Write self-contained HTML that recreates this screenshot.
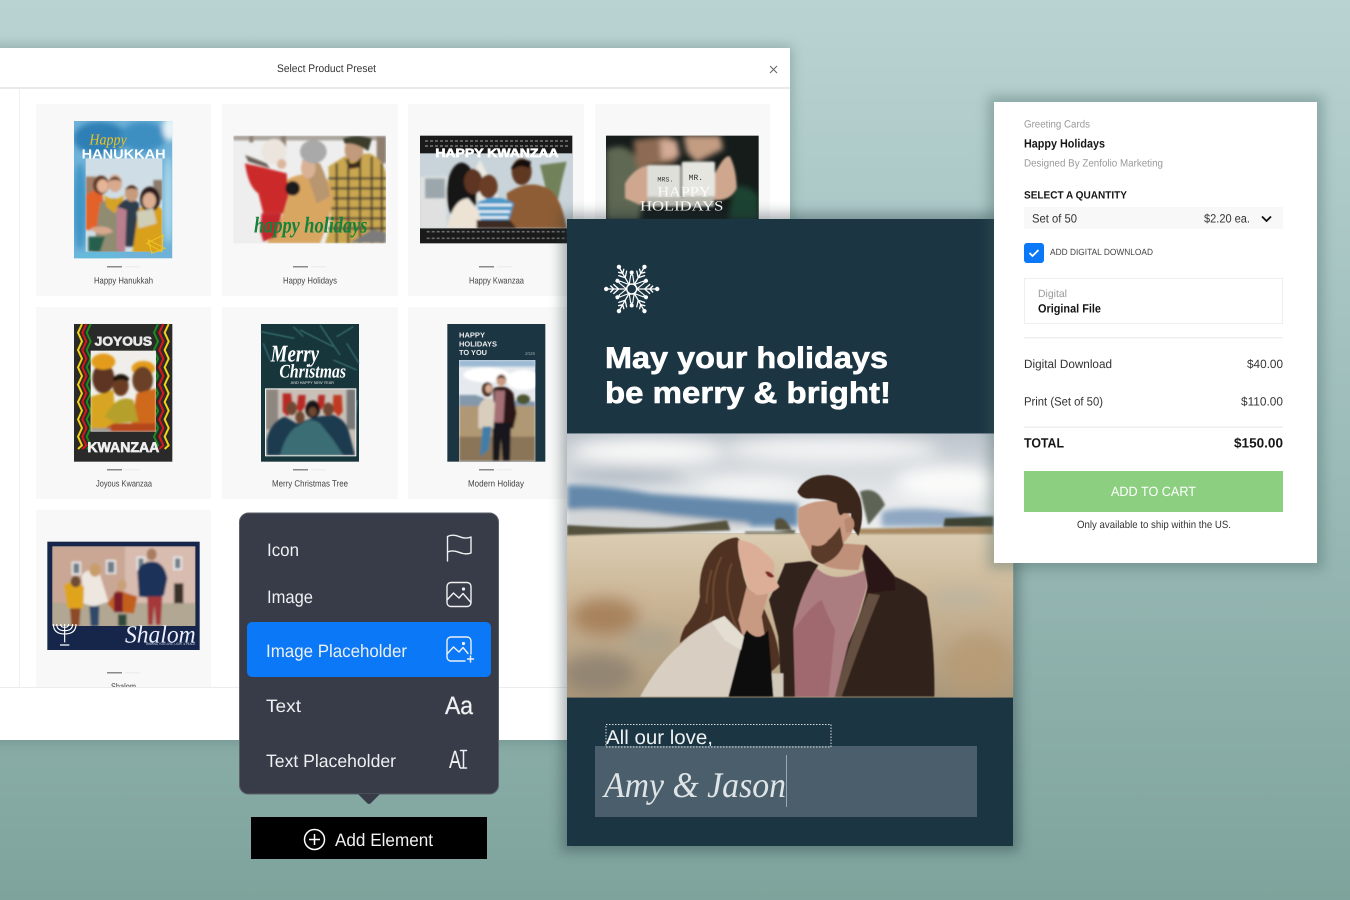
<!DOCTYPE html>
<html lang="en">
<head>
<meta charset="utf-8">
<title>Greeting Cards</title>
<style>
html,body{margin:0;padding:0;width:1350px;height:900px;overflow:hidden;background:#9dbcb9}
svg{display:block;font-family:"Liberation Sans",sans-serif}
text{text-rendering:geometricPrecision}
.lb{font-size:9px;fill:#444}
.m{font-size:18px;fill:#eef0f2}
.g{font-size:10.500px;fill:#9a9a9a}
.d{font-size:12px;fill:#333}
.b{font-weight:700;fill:#151515}
.tb{fill:#8a8a8a}
</style>
</head>
<body>
<svg width="1350" height="900" viewBox="0 0 1350 900" xmlns="http://www.w3.org/2000/svg">
<defs>
<linearGradient id="bg" x1="0" y1="0" x2="0" y2="1"><stop offset="0" stop-color="#b9d3d2"/><stop offset=".5" stop-color="#9cbcb9"/><stop offset="1" stop-color="#7ea39c"/></linearGradient>
<linearGradient id="sky" x1="0" y1="0" x2="0" y2="1"><stop offset="0" stop-color="#bcc4cc"/><stop offset=".6" stop-color="#e4e7e9"/><stop offset="1" stop-color="#eceeee"/></linearGradient>
<linearGradient id="field" x1="0" y1="0" x2="0" y2="1"><stop offset="0" stop-color="#dbcdb3"/><stop offset=".4" stop-color="#cbb697"/><stop offset="1" stop-color="#ab987b"/></linearGradient>
<filter id="b1" x="-20%" y="-20%" width="140%" height="140%"><feGaussianBlur stdDeviation="1.500"/></filter>
<filter id="b2" x="-20%" y="-20%" width="140%" height="140%"><feGaussianBlur stdDeviation="3"/></filter>
<filter id="b3" x="-30%" y="-30%" width="160%" height="160%"><feGaussianBlur stdDeviation="9"/></filter>
<filter id="b4" x="-50%" y="-50%" width="200%" height="200%"><feGaussianBlur stdDeviation="24"/></filter>
<filter id="sh" x="-10%" y="-10%" width="120%" height="120%"><feGaussianBlur stdDeviation="6"/></filter>
<clipPath id="cDlg"><rect x="0" y="89" width="790" height="598"/></clipPath>
<clipPath id="c1"><rect x="222" y="243" width="295" height="412"/></clipPath>
<clipPath id="c1b"><rect x="257" y="355" width="230" height="280"/></clipPath>
<clipPath id="c2"><rect x="700" y="287" width="458" height="323"/></clipPath>
<clipPath id="c3"><rect x="60" y="340" width="457" height="225"/></clipPath>
<clipPath id="c4"><rect x="618" y="287" width="458" height="253"/></clipPath>
<clipPath id="c5"><rect x="272" y="152" width="196" height="243"/></clipPath>
<clipPath id="c6"><rect x="798" y="268" width="268" height="198"/></clipPath>
<clipPath id="c7"><rect x="177" y="180" width="229" height="304"/></clipPath>
<clipPath id="c8"><rect x="67" y="124" width="429" height="239"/></clipPath>
<clipPath id="cM"><rect x="6" y="10" width="1339" height="793"/></clipPath>
<g id="arm" fill="none" stroke="#fff" stroke-width="1.300" stroke-linecap="round">
<path d="M5 0H24M13 0l5-4.500M13 0l5 4.500M18 0l3-3M18 0l3 3"/>
<circle cx="25.500" r="2.200" fill="#fff" stroke="none"/>
</g>
<g id="arm2" fill="none" stroke="#fff" stroke-width="1.100" stroke-linecap="round">
<path d="M4.500 -2.500L14 -1M4.500 2.500L14 1M14 -1V1"/>
<circle cx="16.500" r="2" fill="#fff" stroke="none"/>
</g>
</defs>

<rect width="1350" height="900" fill="url(#bg)"/>

<!-- Preset dialog -->
<rect x="-10" y="46" width="802" height="696" fill="#4a6a68" opacity=".35" filter="url(#sh)"/>
<rect x="0" y="48" width="790" height="692" fill="#fff"/>
<rect x="0" y="87" width="790" height="2" fill="#e9e9e9"/>
<rect x="19" y="89" width="1" height="598" fill="#f0f0f0"/>
<text x="277" y="72" font-size="11" fill="#333" textLength="99" lengthAdjust="spacingAndGlyphs">Select Product Preset</text>
<path d="M770 66l7 7M777 66l-7 7" stroke="#666" stroke-width="1" fill="none"/>

<g fill="#f8f8f8" clip-path="url(#cDlg)">
<rect x="36" y="104" width="175" height="192"/><rect x="222" y="104" width="176" height="192"/><rect x="408" y="104" width="176" height="192"/><rect x="595" y="104" width="175" height="192"/>
<rect x="36" y="307" width="175" height="192"/><rect x="222" y="307" width="176" height="192"/><rect x="408" y="307" width="176" height="192"/>
<rect x="36" y="510" width="175" height="192"/>
</g>

<!-- pager bars -->
<g>
<rect class="tb" x="107" y="266" width="15" height="1.500"/><rect x="125" y="266" width="15" height="1.500" fill="#eee"/>
<rect class="tb" x="293" y="266" width="15" height="1.500"/><rect x="311" y="266" width="15" height="1.500" fill="#eee"/>
<rect class="tb" x="479" y="266" width="15" height="1.500"/><rect x="497" y="266" width="15" height="1.500" fill="#eee"/>
<rect class="tb" x="107" y="469" width="15" height="1.500"/><rect x="125" y="469" width="15" height="1.500" fill="#eee"/>
<rect class="tb" x="293" y="469" width="15" height="1.500"/><rect x="311" y="469" width="15" height="1.500" fill="#eee"/>
<rect class="tb" x="479" y="469" width="15" height="1.500"/><rect x="497" y="469" width="15" height="1.500" fill="#eee"/>
<rect class="tb" x="107" y="672" width="15" height="1.500"/><rect x="125" y="672" width="15" height="1.500" fill="#eee"/>
</g>

<!-- labels -->
<text class="lb" x="94" y="283.500" textLength="59" lengthAdjust="spacingAndGlyphs">Happy Hanukkah</text>
<text class="lb" x="283" y="283.500" textLength="54" lengthAdjust="spacingAndGlyphs">Happy Holidays</text>
<text class="lb" x="469" y="283.500" textLength="55" lengthAdjust="spacingAndGlyphs">Happy Kwanzaa</text>
<text class="lb" x="96" y="486.500" textLength="56" lengthAdjust="spacingAndGlyphs">Joyous Kwanzaa</text>
<text class="lb" x="272" y="486.500" textLength="76" lengthAdjust="spacingAndGlyphs">Merry Christmas Tree</text>
<text class="lb" x="468" y="486.500" textLength="56" lengthAdjust="spacingAndGlyphs">Modern Holiday</text>
<g clip-path="url(#cDlg)"><text class="lb" x="111" y="689.500" textLength="25" lengthAdjust="spacingAndGlyphs">Shalom</text></g>

<!-- Hanukkah -->
<g transform="translate(0,40) scale(.33333)">
<g clip-path="url(#c1)">
<rect x="222" y="243" width="295" height="412" fill="#6fb2d8"/>
<g filter="url(#b3)">
<ellipse cx="300" cy="295" rx="80" ry="50" fill="#2f7fb5"/>
<ellipse cx="430" cy="290" rx="70" ry="45" fill="#3d8fc2"/>
<ellipse cx="240" cy="500" rx="20" ry="130" fill="#3f95c6"/>
<ellipse cx="505" cy="480" rx="14" ry="130" fill="#a8d6ea"/>
<ellipse cx="510" cy="265" rx="22" ry="36" fill="#e6f3f8"/>
<ellipse cx="290" cy="648" rx="80" ry="14" fill="#64bbdc"/>
</g>
</g>
<rect x="257" y="355" width="230" height="280" fill="#cfdde6"/>
<g clip-path="url(#c1b)"><g filter="url(#b2)">
<rect x="257" y="410" width="30" height="60" fill="#a07d66"/>
<rect x="460" y="420" width="27" height="60" fill="#8c7a6a"/>
<path d="M257 470q20-30 50-10l15 110-65 0z" fill="#e2622b"/>
<ellipse cx="303" cy="435" rx="24" ry="28" fill="#5f3a27"/><ellipse cx="308" cy="438" rx="17" ry="20" fill="#e6b497"/>
<path d="M300 490q40-30 80 0l-10 150h-90z" fill="#8f8c72"/>
<path d="M312 465q30 25 60 0l-8 35-20 20-25-20z" fill="#d7a324"/>
<ellipse cx="345" cy="430" rx="21" ry="26" fill="#d8a98d"/><path d="M325 425q20-30 40 0q-20-12-40 0z" fill="#3b2a20"/>
<path d="M352 500q30-40 65-10l5 130h-45z" fill="#2f3c4c"/><path d="M350 500l30 10-5 130-25-10z" fill="#b97f8e"/>
<ellipse cx="395" cy="460" rx="20" ry="25" fill="#c79a7b"/><path d="M375 450q20-28 40 0q-20-10-40 0z" fill="#2c211b"/>
<path d="M415 510q40-35 72 0v130h-90z" fill="#d9a01f"/>
<ellipse cx="450" cy="478" rx="30" ry="38" fill="#2a1f1b"/><ellipse cx="448" cy="482" rx="20" ry="24" fill="#dcae92"/>
<path d="M410 515l50-10 10 45-55 15z" fill="#cfcfb8"/>
<path d="M265 590h50l-15 45h-35z" fill="#27614e"/>
<path d="M270 565q50-15 70 10-40 20-70-10z" fill="#d7a88d"/>
</g></g>
<text x="268" y="314" font-family="Liberation Serif" font-style="italic" font-size="46" fill="#efc21f" textLength="112" lengthAdjust="spacingAndGlyphs">Happy</text>
<text x="245" y="355" font-size="40" font-weight="700" fill="#fff" textLength="252" lengthAdjust="spacingAndGlyphs">HANUKKAH</text>
<path d="M440 610l50-25-5 50zM495 625l-50-25 10 40z" fill="none" stroke="#eec51f" stroke-width="3"/>
</g>

<!-- Happy Holidays -->
<g transform="translate(0,40) scale(.33333)">
<rect x="700" y="287" width="458" height="323" fill="#eeeeee"/>
<g clip-path="url(#c2)"><g filter="url(#b2)">
<path d="M700 287h458v14H700z" fill="#a8a29a"/>
<path d="M1130 290h28v80h-28zM842 287h16v34h-16zM748 287h12v20h-12z" fill="#8f7e6e"/>
<path d="M985 380q45-30 60-35l65-5q40 20 48 60v210H975q25-70 15-130z" fill="#c9a64f"/>
<g stroke="#2b2b2b" stroke-width="6" opacity=".85"><path d="M985 415h175M985 445h175M985 475h175M985 505h175M985 535h175M985 565h175M1010 370v240M1045 355v255M1080 350v260M1115 350v260M1145 370v240"/></g>
<path d="M1050 608h108v-30l-40-10z" fill="#7b7b7b"/>
<ellipse cx="1062" cy="330" rx="28" ry="33" fill="#c29a7c"/>
<path d="M1030 350q25 40 55 0l-5 32-30 5z" fill="#3d2b1f"/>
<path d="M1028 295q42-15 88 0l-11 38q-45-28-70-21z" fill="#3a3d2a"/>
<path d="M860 420q60-35 125 0l15 50q-10 70-40 140H800q50-70 65-140z" fill="#d9a662"/>
<path d="M905 360l55 10q25 50 30 100l-40 20-20-60z" fill="#b89670"/>
<ellipse cx="925" cy="385" rx="22" ry="30" fill="#d9b195"/>
<ellipse cx="940" cy="335" rx="40" ry="35" fill="#a9a9a9"/>
<path d="M735 370q45 10 65 15l60 15 5 70-15 50h-60l-15-60q-30-20-40-90z" fill="#cc2c2b"/>
<path d="M785 520h60l-15 70-40 15-10-35z" fill="#c5272e"/>
<ellipse cx="822" cy="335" rx="38" ry="38" fill="#ebe5de"/>
<ellipse cx="845" cy="372" rx="14" ry="15" fill="#dcb69c"/>
<path d="M735 345l65 25 10 15-65-20z" fill="#6b6058"/>
<ellipse cx="878" cy="445" rx="22" ry="22" fill="#1c1c1e"/>
</g></g>
<text x="762" y="578" font-family="Liberation Serif" font-style="italic" font-weight="700" font-size="68" fill="#16813a" textLength="340" lengthAdjust="spacingAndGlyphs">happy holidays</text>
</g>

<!-- Kwanzaa -->
<g transform="translate(400,40) scale(.33333)">
<rect x="60" y="287" width="457" height="323" fill="#1a1a1a"/>
<path d="M75 303h430M75 318h430M80 575h430M80 595h430" stroke="#6a6a6a" stroke-width="5" stroke-dasharray="9 6"/>
<rect x="60" y="340" width="457" height="225" fill="#c9d4da"/>
<g clip-path="url(#c3)"><g filter="url(#b2)">
<path d="M60 410h80v155H60z" fill="#dfe0df"/><path d="M75 415h60v60H75z" fill="#9ba7ad"/>
<path d="M240 360l60 120h-120z" fill="#eceae2"/>
<path d="M420 375l80-10-15 60-10 50h-30z" fill="#71825a"/>
<ellipse cx="185" cy="460" rx="45" ry="92" fill="#131318"/>
<ellipse cx="220" cy="425" rx="28" ry="38" fill="#5d3522"/>
<path d="M140 565q20-90 65-90l25 30 20 60z" fill="#ece3d5"/>
<path d="M320 460q60-40 110-20 50 10 70 125H330z" fill="#8e5d36"/>
<ellipse cx="365" cy="395" rx="30" ry="40" fill="#5e3823"/>
<path d="M333 385q20-40 60-20l-5 20q-30-15-50 5z" fill="#14100e"/>
<ellipse cx="265" cy="440" rx="28" ry="36" fill="#6a3e28"/>
<path d="M232 490q50-35 110 0l-15 50h-85z" fill="#4c9ac9"/>
<g stroke="#fff" stroke-width="6"><path d="M235 495l100 0M235 515l95 0M240 532l85 0"/></g>
<path d="M230 540l100 0 20 25h-120z" fill="#3c2a24"/>
</g></g>
<text x="106" y="351" font-size="36" font-weight="700" fill="#fff" stroke="#fff" stroke-width="2" textLength="370" lengthAdjust="spacingAndGlyphs">HAPPY KWANZAA</text>
</g>

<!-- Mugs -->
<g transform="translate(400,40) scale(.33333)">
<rect x="618" y="287" width="458" height="253" fill="#161c1a"/>
<g clip-path="url(#c4)"><g filter="url(#b3)">
<path d="M618 330q40-20 70 0l60 60-30 150H618z" fill="#5f6752"/>
<path d="M700 300l110-13 20 80-120 20z" fill="#8c6b52"/>
<path d="M780 300h50l10 50-55 10z" fill="#d4ab95"/>
<path d="M850 287h110l10 40-80 40-30-30z" fill="#c39c82"/>
<path d="M1000 440q50-10 76 30v70h-90z" fill="#1d4231"/>
</g>
<g filter="url(#b2)">
<path d="M675 430q30-50 75-55l10 100-40 20-45-20z" fill="#cfa78f"/>
<path d="M945 400q30-60 45-50 20 40 20 95-20 40-70 35z" fill="#cfa78f"/>
<rect x="742" y="375" width="100" height="100" rx="6" fill="#dfdfda"/>
<rect x="845" y="365" width="100" height="105" rx="6" fill="#e6e6e1"/>
<rect x="742" y="470" width="200" height="30" fill="#b7b7ae"/>
</g></g>
<text x="772" y="425" font-family="Liberation Mono" font-size="20" fill="#333">MRS.</text>
<text x="866" y="420" font-family="Liberation Mono" font-size="24" fill="#333">MR.</text>
<text x="772" y="470" font-family="Liberation Serif" font-size="44" fill="#fff" opacity=".8" textLength="160" lengthAdjust="spacingAndGlyphs">HAPPY</text>
<text x="720" y="512" font-family="Liberation Serif" font-size="42" fill="#fff" textLength="250" lengthAdjust="spacingAndGlyphs">HOLIDAYS</text>
</g>

<!-- Joyous Kwanzaa -->
<g transform="translate(0,300) scale(.33333)">
<rect x="222" y="72" width="295" height="413" fill="#2a2a2a"/>
<g fill="none" stroke-width="6">
<path d="M246 72l-12 26 12 26-12 26 12 26-12 26 12 26-12 26 12 26-12 26 12 26-12 26 12 26-12 26 12 26 -12 11" stroke="#f3d312"/>
<path d="M259 72l-12 26 12 26-12 26 12 26-12 26 12 26-12 26 12 26-12 26 12 26-12 26 12 26-12 26 12 26 -12 11" stroke="#d9161a"/>
<path d="M272 72l-12 26 12 26-12 26 12 26-12 26 12 26-12 26 12 26-12 26 12 26-12 26 12 26-12 26 12 26 -12 11" stroke="#1d8a1d"/>
<path d="M474 72l-12 26 12 26-12 26 12 26-12 26 12 26-12 26 12 26-12 26 12 26-12 26 12 26-12 26 12 26 -12 11" stroke="#1d8a1d"/>
<path d="M490 72l-12 26 12 26-12 26 12 26-12 26 12 26-12 26 12 26-12 26 12 26-12 26 12 26-12 26 12 26 -12 11" stroke="#d9161a"/>
<path d="M506 72l-12 26 12 26-12 26 12 26-12 26 12 26-12 26 12 26-12 26 12 26-12 26 12 26-12 26 12 26 -12 11" stroke="#f3d312"/>
</g>
<rect x="272" y="152" width="196" height="243" fill="#efeeea"/>
<g clip-path="url(#c5)"><g filter="url(#b2)">
<path d="M272 290l68-20 10 125H272z" fill="#d8a522"/>
<ellipse cx="310" cy="235" rx="33" ry="45" fill="#5d3620"/>
<ellipse cx="310" cy="185" rx="36" ry="24" fill="#e39b1c"/>
<ellipse cx="430" cy="205" rx="35" ry="22" fill="#e39b1c"/>
<ellipse cx="428" cy="240" rx="31" ry="40" fill="#6b3f25"/>
<path d="M410 280l58-15v130h-78z" fill="#cf6a1a"/>
<path d="M315 350q35-70 85-50l15 65-65 5z" fill="#b4a02b"/>
<ellipse cx="362" cy="258" rx="24" ry="30" fill="#6a3d24"/>
<path d="M338 235q25-25 50 0l-5 10q-20-12-40 0z" fill="#1c1410"/>
<path d="M340 370h128v25H300z" fill="#b5471f"/>
<rect x="272" y="385" width="60" height="10" fill="#999"/>
</g></g>
<text x="284" y="137" font-size="38" font-weight="700" fill="#e8e8e8" stroke="#e8e8e8" stroke-width="2" textLength="172" lengthAdjust="spacingAndGlyphs">JOYOUS</text>
<text x="262" y="456" font-size="42" font-weight="700" fill="#eee" stroke="#eee" stroke-width="2" textLength="216" lengthAdjust="spacingAndGlyphs">KWANZAA</text>
</g>

<!-- Merry Christmas -->
<g transform="translate(0,300) scale(.33333)">
<rect x="783" y="72" width="294" height="413" fill="#17363c"/>
<g stroke="#3d7a78" stroke-width="4" fill="none" opacity=".8" filter="url(#b1)">
<path d="M783 95l100 20M900 90l100 50M960 75l60 90M1040 130l37 60M1000 180l70 30M790 130l20 50M880 80l30 30M1010 110l50-30M1072 300l-20 160"/>
</g>
<rect x="795" y="265" width="274" height="204" fill="#f0f0f0"/>
<rect x="798" y="268" width="268" height="198" fill="#c9c1b8"/>
<g clip-path="url(#c6)"><g filter="url(#b2)">
<rect x="798" y="268" width="36" height="120" fill="#8d8780"/>
<rect x="1040" y="268" width="26" height="120" fill="#777"/>
<path d="M848 280h25l5 40-15 30-15-15z" fill="#b82a26"/>
<path d="M895 285h22l-2 35-15 20-10-15z" fill="#b82a26"/>
<path d="M955 285h20l-2 30-10 15-10-15z" fill="#b82a26"/>
<path d="M1000 285h25l3 50-12 15-18-20z" fill="#c13a22"/>
<path d="M800 420q10-55 55-70l35 20 60-20 50-5q40 15 48 55l17 66H800z" fill="#1c3a50"/>
<path d="M840 466q20-76 60-91 30-25 60-5l40 50 30 46z" fill="#3a6d74"/>
<ellipse cx="875" cy="325" rx="16" ry="20" fill="#6e4630"/>
<ellipse cx="985" cy="328" rx="16" ry="20" fill="#6e4630"/>
<ellipse cx="938" cy="328" rx="22" ry="26" fill="#181416"/>
<ellipse cx="938" cy="335" rx="12" ry="14" fill="#6e4630"/>
<ellipse cx="900" cy="352" rx="14" ry="18" fill="#6e4630"/>
</g></g>
<text x="812" y="185" font-family="Liberation Serif" font-style="italic" font-weight="700" font-size="72" fill="#fff" textLength="145" lengthAdjust="spacingAndGlyphs">Merry</text>
<text x="838" y="232" font-family="Liberation Serif" font-style="italic" font-weight="700" font-size="58" fill="#fff" textLength="200" lengthAdjust="spacingAndGlyphs">Christmas</text>
<text x="872" y="252" font-size="12" fill="#ddd" textLength="130" lengthAdjust="spacingAndGlyphs">AND HAPPY NEW YEAR</text>
</g>

<!-- Modern Holiday -->
<g transform="translate(400,300) scale(.33333)">
<rect x="142" y="72" width="294" height="413" fill="#1b3543"/>
<text x="177" y="113" font-size="22" font-weight="700" fill="#eee" textLength="78" lengthAdjust="spacingAndGlyphs">HAPPY</text>
<text x="177" y="139" font-size="22" font-weight="700" fill="#eee" textLength="114" lengthAdjust="spacingAndGlyphs">HOLIDAYS</text>
<text x="177" y="165" font-size="22" font-weight="700" fill="#eee" textLength="84" lengthAdjust="spacingAndGlyphs">TO YOU</text>
<text x="375" y="165" font-size="13" fill="#9aa" textLength="30" lengthAdjust="spacingAndGlyphs">2025</text>
<rect x="177" y="180" width="229" height="304" fill="#e6eaee"/>
<g clip-path="url(#c7)"><g filter="url(#b2)">
<rect x="177" y="180" width="229" height="20" fill="#9dbad4"/>
<ellipse cx="260" cy="225" rx="70" ry="22" fill="#fff"/>
<ellipse cx="370" cy="240" rx="50" ry="30" fill="#fff"/>
<path d="M177 285l50 0 40 15 139 5v15H177z" fill="#8498ab"/>
<rect x="177" y="318" width="229" height="166" fill="#b09874"/>
<rect x="177" y="410" width="229" height="74" fill="#8b7559"/>
<ellipse cx="370" cy="298" rx="20" ry="15" fill="#4c5433"/>
<path d="M280 265q40-15 60 15l10 60-10 45-60 0z" fill="#2b1814"/>
<path d="M285 272h30l-5 95h-30z" fill="#a56f74"/>
<path d="M278 368h55l-3 115h-22l-5-70-5 70h-20z" fill="#15131a"/>
<ellipse cx="304" cy="240" rx="15" ry="18" fill="#c89b80"/>
<path d="M288 238q15-25 32 0-16-10-32 0z" fill="#33241b"/>
<path d="M235 325q10-35 40-30l10 15-5 75-45 0z" fill="#d9cebd"/>
<path d="M248 380h27l-10 70-25 20z" fill="#3f7ea8"/>
<ellipse cx="262" cy="268" rx="16" ry="22" fill="#4a2d20"/><ellipse cx="266" cy="266" rx="10" ry="13" fill="#d9ac92"/>
</g></g>
</g>

<!-- Shalom -->
<g transform="translate(30,505) scale(.33333)">
<rect x="52" y="110" width="457" height="325" fill="#15264a"/>
<rect x="67" y="124" width="429" height="239" fill="#bba591"/>
<g clip-path="url(#c8)"><g filter="url(#b2)">
<rect x="67" y="124" width="220" height="170" fill="#c9a794"/>
<rect x="285" y="124" width="211" height="170" fill="#d8bcb0"/>
<rect x="67" y="295" width="429" height="68" fill="#b1a793"/>
<g fill="#eee"><rect x="125" y="170" width="28" height="40"/><rect x="228" y="165" width="30" height="42"/><rect x="320" y="155" width="26" height="42"/><rect x="430" y="155" width="26" height="40"/></g>
<g fill="#6f7b88"><rect x="130" y="175" width="18" height="30"/><rect x="233" y="170" width="20" height="33"/><rect x="325" y="160" width="16" height="33"/><rect x="435" y="160" width="16" height="30"/></g>
<rect x="432" y="235" width="28" height="60" fill="#3b3329"/>
<path d="M155 210q30-30 55 0l25 80-45 15-30-10z" fill="#eee7e0"/>
<ellipse cx="195" cy="195" rx="17" ry="20" fill="#c89d6a"/>
<path d="M178 303h30l-2 60h-24z" fill="#2e4a6b"/>
<path d="M102 240q30-20 60 5l-2 65-48 0z" fill="#e0a41a"/>
<ellipse cx="137" cy="230" rx="15" ry="17" fill="#6e4b31"/>
<path d="M120 310h32l-4 53h-24z" fill="#8e4a26"/>
<path d="M232 295l30-40 30 10 30 10-10 50-60-5z" fill="#c25f1c"/>
<rect x="252" y="262" width="26" height="60" fill="#7b1f2c"/>
<ellipse cx="276" cy="240" rx="14" ry="16" fill="#c8a078"/>
<path d="M264 328h26v35h-26z" fill="#2e4a3a"/>
<path d="M322 200q10-30 45-30t45 50l-10 50-15 10-60-5z" fill="#1f3358"/>
<ellipse cx="365" cy="148" rx="15" ry="18" fill="#a97c60"/>
<path d="M352 275h45l-5 85h-14l-5-60-5 60h-14z" fill="#a5393a"/>
</g></g>
<g stroke="#fff" stroke-width="3.500" fill="none">
<path d="M104 357v55M70 357q0 30 34 30t34-30M80 357q0 20 24 20t24-20M92 357q0 10 12 10t12-10M90 420h28"/>
</g>
<text x="285" y="412" font-family="Liberation Serif" font-style="italic" font-size="74" fill="#eef" textLength="212" lengthAdjust="spacingAndGlyphs">Shalom</text>
<text x="348" y="420" font-size="10" fill="#dde" textLength="148" lengthAdjust="spacingAndGlyphs">WISHING YOU LOVE, LIGHT &amp; PEACE</text>
</g>

<!-- dialog footer -->
<rect x="0" y="687" width="790" height="53" fill="#fff"/>
<rect x="0" y="687" width="790" height="1" fill="#ececec"/>

<!-- Add element menu -->
<rect x="239.500" y="513" width="259" height="281" rx="9" fill="#383c48" stroke="#5b5f68" stroke-width="1"/>
<path d="M358 794h22l-9 9q-2 2-4 0z" fill="#383c48"/>
<rect x="247" y="622" width="244" height="55" rx="5" fill="#0a78f7"/>
<text class="m" x="267" y="556" textLength="32" lengthAdjust="spacingAndGlyphs">Icon</text>
<text class="m" x="267" y="603" textLength="46" lengthAdjust="spacingAndGlyphs">Image</text>
<text class="m" x="266" y="657" fill="#fff" textLength="141" lengthAdjust="spacingAndGlyphs">Image Placeholder</text>
<text class="m" x="266" y="712" textLength="35" lengthAdjust="spacingAndGlyphs">Text</text>
<text class="m" x="266" y="767" textLength="130" lengthAdjust="spacingAndGlyphs">Text Placeholder</text>

<g fill="none" stroke="#eef0f2" stroke-width="1.400" stroke-linecap="round" stroke-linejoin="round">
<path d="M447.500 561V536.500c4-2 8-1.500 12 .2s8 1.800 11.500 .3V553c-4 1.500-8 1-12-.7s-8-1.800-11.500-.3"/>
<rect x="447" y="582.500" width="24" height="24" rx="4"/>
<path d="M447 600l6.500-7 5.500 5 4-4.500 8 9"/>
<circle cx="463.500" cy="589" r=".9" fill="#eef0f2"/>
<path d="M465 661h-14a4 4 0 0 1-4-4v-16a4 4 0 0 1 4-4h16a4 4 0 0 1 4 4v13"/>
<path d="M447 654l6.500-7 5.500 5 4-4.500 5 6"/>
<circle cx="463.500" cy="643.500" r=".9" fill="#eef0f2"/>
<path d="M470.500 656v6M467.500 659h6" stroke-width="1.500"/>
<path d="M460.500 750.500h6M460.500 768h6M463.500 750.500v17.500" stroke-width="1.500"/>
</g>
<text x="445" y="714" font-size="25" fill="#eef0f2" stroke="#eef0f2" stroke-width=".3" textLength="28" lengthAdjust="spacingAndGlyphs">Aa</text>
<text x="449" y="768" font-size="25" fill="#eef0f2" textLength="12" lengthAdjust="spacingAndGlyphs">A</text>

<rect x="251" y="817" width="236" height="42" fill="#000"/>
<circle cx="314.500" cy="839.500" r="10" fill="none" stroke="#fff" stroke-width="1.500"/>
<path d="M314.500 834v11M309 839.500h11" stroke="#fff" stroke-width="1.500"/>
<text x="335" y="846" font-size="18" fill="#f2f2f2" textLength="98" lengthAdjust="spacingAndGlyphs">Add Element</text>

<!-- Card -->
<rect x="561" y="213" width="458" height="639" fill="#1a2f38" opacity=".35" filter="url(#sh)"/>
<rect x="567" y="219" width="446" height="627" fill="#1b3543"/>
<g transform="translate(631.700,289)">
<circle r="5" fill="none" stroke="#fff" stroke-width="1.500"/>
<use href="#arm"/><use href="#arm" transform="rotate(60)"/><use href="#arm" transform="rotate(120)"/><use href="#arm" transform="rotate(180)"/><use href="#arm" transform="rotate(240)"/><use href="#arm" transform="rotate(300)"/>
<use href="#arm2" transform="rotate(30)"/><use href="#arm2" transform="rotate(90)"/><use href="#arm2" transform="rotate(150)"/><use href="#arm2" transform="rotate(210)"/><use href="#arm2" transform="rotate(270)"/><use href="#arm2" transform="rotate(330)"/>
</g>
<text x="605" y="368" font-size="30" font-weight="700" fill="#fff" stroke="#fff" stroke-width=".6" textLength="283" lengthAdjust="spacingAndGlyphs">May your holidays</text>
<text x="605" y="403" font-size="30" font-weight="700" fill="#fff" stroke="#fff" stroke-width=".6" textLength="286" lengthAdjust="spacingAndGlyphs">be merry &amp; bright!</text>

<!-- Couple photo -->
<g transform="translate(565,430) scale(.33333)">
<g clip-path="url(#cM)">
<rect x="6" y="10" width="1339" height="300" fill="url(#sky)"/>
<g filter="url(#b4)">
<ellipse cx="250" cy="65" rx="230" ry="40" fill="#f8f8f7"/>
<ellipse cx="800" cy="60" rx="320" ry="40" fill="#f2f3f3"/>
<ellipse cx="1150" cy="160" rx="160" ry="50" fill="#fbfbfa"/>
<ellipse cx="560" cy="170" rx="160" ry="25" fill="#f8f8f7"/>
<ellipse cx="180" cy="135" rx="180" ry="16" fill="#9aa6b3"/>
</g>
<g filter="url(#b3)">
<path d="M6 165q120 0 250 25 200 15 444 30v70H6z" fill="#6488aa"/>
<path d="M950 245q100-25 335 15v30H950z" fill="#8fa7c2"/>
<path d="M6 240q130-10 300 15l250 25-20 20H6z" fill="#d3d5d6"/>
</g>
<rect x="6" y="310" width="1339" height="493" fill="url(#field)"/>
<g filter="url(#b2)">
<path d="M6 285q200 12 300 8l180-22 10 30-490 15zM540 305h100l50-5v10H540zM630 270q25-20 50 30h-50z" fill="#55513e"/>
<path d="M885 185q50-20 75 40l-50 60z" fill="#5d6354"/>
<path d="M1140 265l145-5v30h-150z" fill="#3e4330"/>
<path d="M880 296l405-6v22H880z" fill="#a98a62"/>
</g>
<g filter="url(#b4)">
<ellipse cx="120" cy="560" rx="100" ry="55" fill="#a07650" opacity=".8"/>
<ellipse cx="260" cy="630" rx="80" ry="40" fill="#a8a08c" opacity=".7"/>
<ellipse cx="100" cy="730" rx="110" ry="60" fill="#857a6c" opacity=".7"/>
<ellipse cx="1240" cy="700" rx="100" ry="90" fill="#b79a73" opacity=".8"/>
<ellipse cx="1190" cy="505" rx="100" ry="25" fill="#b4b4a2" opacity=".7"/>
</g>
<g filter="url(#b1)">
<!-- man -->
<path d="M755 415q55 50 145 5l5 50q-25 90-55 170l-40 160H690l-5-200q15-100 70-185z" fill="#ab7b80"/>
<path d="M690 800l-4-200q49-70 84-90 10 30 40 90l-20 200z" fill="#a0696f"/>
<path d="M612 510q38-80 48-110l75-7 25 12q-60 95-75 195l5 200h-40l-10-180z" fill="#33201c"/>
<path d="M885 347l20-2q55 55 85 95 70 30 95 60 25 140 23 300H810l40-160q40-90 58-170z" fill="#33201c"/>
<path d="M885 347q35-7 105 103v30l-85 10q10-70-20-143z" fill="#291816"/>
<path d="M910 490l35 5q-45 105-115 305h-20q40-160 100-310z" fill="#65503f"/>
<path d="M770 400q20 20 110 20l20-75-70-5z" fill="#c0917a"/>
<path d="M700 235q-5 55 8 80 17 25 27 50 15 35 40 35 50-15 60-60l25-30q10-40-10-60l-30-35q-70-10-120 20z" fill="#c99a82"/>
<path d="M740 345q35 10 50-15 15-10 35-40l10 55q-15 40-60 57-30-7-37-32z" fill="#5a3b2a"/>
<path d="M697 185q23-50 93-50 70 5 95 70 15 55-5 113l-20-28-2-40-23 0q-15 20-20-30-35-15-75-15-30 5-43-20z" fill="#3a271c"/>
<path d="M838 270q25-20 30 10 0 25-25 30z" fill="#b98a70"/>
<!-- woman -->
<path d="M620 730l35 0v70h-40z" fill="#d0c8b9"/>
<path d="M515 322q-65 8-95 73-20 45-15 105-10 50-45 90-15 30-15 50 55-50 125-75l65 55 10 80 15 50 65-30 20-20q-5-60-25-110l-30-70-45-50q-25-70-20-140z" fill="#4f3323"/>
<g fill="none" stroke="#7a5236" stroke-width="6" opacity=".7"><path d="M470 380q-30 60-25 130t-40 90M500 400q-20 50-10 110t30 90M440 420q-15 50-15 100"/></g>
<path d="M545 470q25 30 65 20l-20 70 10 60-65 5-15-55z" fill="#c99a82"/>
<path d="M520 330q50 5 80 40 30 20 28 40l-3 30 18 30q-23 25-68 25-30-20-40-75-20-50-15-90z" fill="#dcae98"/>
<path d="M600 425q15-5 28 15-18 10-28-15z" fill="#7d2a25"/>
<path d="M485 800l40-160 20-40q35 40 65 0l15 200z" fill="#0e0c0e"/>
<path d="M225 800q55-100 120-155 55-55 125-83l65 63-45 175z" fill="#d8cfc2"/>
<path d="M440 575l38-17 59 62-9 40-48-28z" fill="#e4ddd2"/>
</g>
</g>
</g>

<!-- below-photo -->
<text x="606" y="744" font-size="20" fill="#eef1f2" textLength="107" lengthAdjust="spacingAndGlyphs">All our love,</text>
<rect x="595" y="746" width="382" height="71" fill="#4a5f6b"/>
<rect x="606" y="724.500" width="225" height="22.500" fill="none" stroke="#d8dde0" stroke-width="1" stroke-dasharray="1.500 1.500"/>
<text x="604" y="797" font-family="Liberation Serif" font-style="italic" font-size="36" fill="#dfe4e6" textLength="182" lengthAdjust="spacingAndGlyphs">Amy &amp; Jason</text>
<rect x="786" y="755" width="1" height="52" fill="#9aa8af"/>

<!-- Product panel -->
<rect x="988" y="96" width="335" height="473" fill="#3f5e5c" opacity=".35" filter="url(#sh)"/>
<rect x="994" y="102" width="323" height="461" fill="#fff"/>
<text class="g" x="1024" y="127.500" textLength="66" lengthAdjust="spacingAndGlyphs">Greeting Cards</text>
<text x="1024" y="147.500" font-size="12" class="b" textLength="81" lengthAdjust="spacingAndGlyphs">Happy Holidays</text>
<text class="g" x="1024" y="166.500" textLength="139" lengthAdjust="spacingAndGlyphs">Designed By Zenfolio Marketing</text>
<text x="1024" y="198.500" font-size="10.500" class="b" textLength="103" lengthAdjust="spacingAndGlyphs">SELECT A QUANTITY</text>
<rect x="1024" y="207" width="259" height="22" fill="#f8f8f8"/>
<text class="d" x="1032" y="222.500" textLength="45" lengthAdjust="spacingAndGlyphs">Set of 50</text>
<text class="d" x="1204" y="222.500" textLength="46" lengthAdjust="spacingAndGlyphs">$2.20 ea.</text>
<path d="M1262 216.500l4.500 4.500 4.500-4.500" fill="none" stroke="#111" stroke-width="1.800"/>
<rect x="1024" y="243" width="20" height="20" rx="3" fill="#0a78f7"/>
<path d="M1029.500 253l3 3 6-6" fill="none" stroke="#fff" stroke-width="1.800"/>
<text x="1050" y="255.200" font-size="9" fill="#444" textLength="103" lengthAdjust="spacingAndGlyphs">ADD DIGITAL DOWNLOAD</text>
<rect x="1024.500" y="278.500" width="258" height="45" fill="#fff" stroke="#eee" stroke-width="1"/>
<text class="g" x="1038" y="297" textLength="29" lengthAdjust="spacingAndGlyphs">Digital</text>
<text x="1038" y="312.500" font-size="12" class="b" textLength="63" lengthAdjust="spacingAndGlyphs">Original File</text>
<rect x="1024" y="337" width="259" height="1.500" fill="#eee"/>
<text class="d" x="1024" y="368" textLength="88" lengthAdjust="spacingAndGlyphs">Digital Download</text>
<text class="d" x="1247" y="368" textLength="36" lengthAdjust="spacingAndGlyphs">$40.00</text>
<text class="d" x="1024" y="405.500" textLength="79" lengthAdjust="spacingAndGlyphs">Print (Set of 50)</text>
<text class="d" x="1241" y="405.500" textLength="42" lengthAdjust="spacingAndGlyphs">$110.00</text>
<rect x="1024" y="426.500" width="259" height="1.500" fill="#eee"/>
<text x="1024" y="447.500" font-size="13.500" class="b" textLength="40" lengthAdjust="spacingAndGlyphs">TOTAL</text>
<text x="1234" y="447.500" font-size="13.500" class="b" textLength="49" lengthAdjust="spacingAndGlyphs">$150.00</text>
<rect x="1024" y="471" width="259" height="41" fill="#8ccf80"/>
<text x="1111" y="496" font-size="13.500" fill="#fff" textLength="85" lengthAdjust="spacingAndGlyphs">ADD TO CART</text>
<text x="1077" y="528" font-size="10.500" fill="#333" textLength="154" lengthAdjust="spacingAndGlyphs">Only available to ship within the US.</text>
</svg>
</body>
</html>
